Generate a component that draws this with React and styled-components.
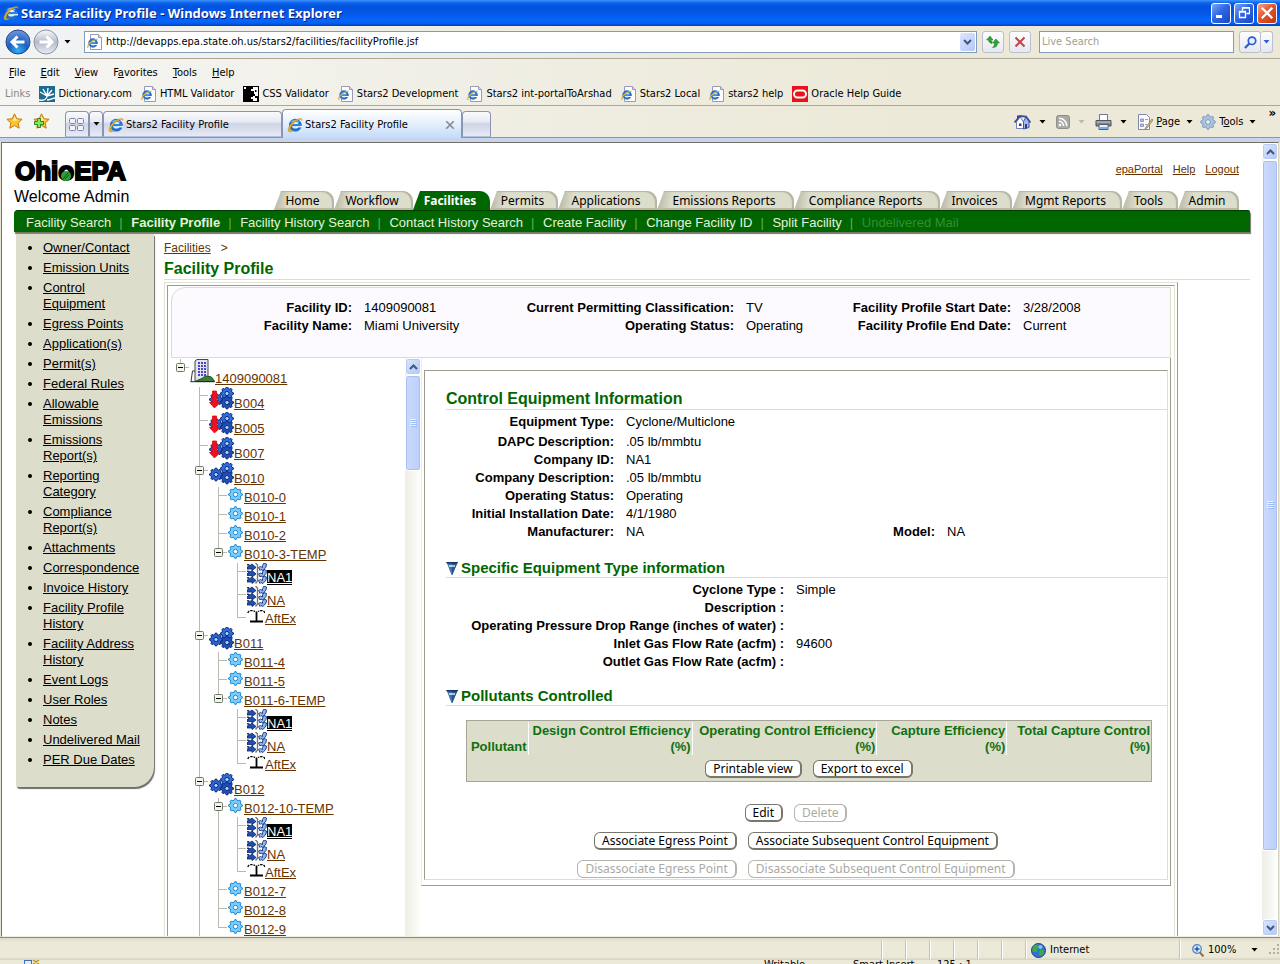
import React from "react";
import styled, { createGlobalStyle, css } from "styled-components";

const sans = `"Liberation Sans", Arial, sans-serif`;
const ui = `"DejaVu Sans Condensed", "DejaVu Sans", sans-serif`;
const label = `"Noto Sans", "Open Sans", sans-serif`;

const Global = createGlobalStyle`
  *, *::before, *::after { box-sizing: border-box; }
  html, body { margin: 0; padding: 0; }
  body { font-family: ${sans}; font-size: 13px; color: #000; background: #fff; overflow: hidden; }
  button, input { font: inherit; color: inherit; margin: 0; padding: 0; }
  button { background: none; border: 0; }
  svg { display: block; flex: none; }
  ul, dl, dd, h1, h2, h3, p { margin: 0; padding: 0; }
  ul { list-style: none; }
`;

/* ---------- icons ---------- */

const IeMark = ({ size = 16 }) => (
  <svg width={size} height={size} viewBox="0 0 16 16" aria-hidden="true">
    <circle cx="8.3" cy="8.2" r="4.9" fill="#dff1fc" stroke="#1f6fd0" strokeWidth="3" />
    <path d="M9 10.4h6v-1.500h-6z" fill="#fff" />
    <path d="M4.500 7h9.800v2.200H4.500z" fill="#2a86de" />
    <path d="M4.500 5.200A4.700 4.700 0 0 1 12 5.100" fill="none" stroke="#6cc3f4" strokeWidth="1.200" />
    <path d="M1.600 14.600C-.6 12.600 3.200 5.600 9.400 2.600c4-2 6.400-1.400 5.600 1.200C14.600 1.800 11.600 2.400 8.800 4.600 4.800 7.400 2.200 11.800 3.400 13.600c.9.7 2 .2 3 -.2-1.600 1.400-3.900 2-4.800 1.200z" fill="#e8ae26" stroke="#b98415" strokeWidth=".3" />
  </svg>
);

const IePage = () => (
  <svg width="16" height="16" viewBox="0 0 16 16" aria-hidden="true">
    <path d="M3.500.5h8l3 3v12h-11z" fill="#fdfdff" stroke="#9a9ab4" />
    <path d="M11.500.5v3h3" fill="#d8d8ea" stroke="#9a9ab4" />
    <circle cx="6" cy="9" r="3.600" fill="#e2f2fc" stroke="#2574cf" strokeWidth="2.200" />
    <path d="M3.500 8.300h7v1.500h-7z" fill="#2574cf" />
    <path d="M7 10.500h4" stroke="#fff" strokeWidth="1" />
    <path d="M1 14C0 11.500 3.500 6.500 10.500 5" fill="none" stroke="#dcae3b" strokeWidth="1.200" />
  </svg>
);

const Arrow = ({ color = "#000" }) => (
  <svg width="7" height="4" viewBox="0 0 7 4" aria-hidden="true">
    <path d="M.5 0h6L3.500 3.500z" fill={color} />
  </svg>
);

const Back = () => (
  <svg width="26" height="26" viewBox="0 0 26 26" aria-hidden="true">
    <defs>
      <radialGradient id="bk" cx=".5" cy=".85" r=".8">
        <stop offset="0" stopColor="#2fb2f4" />
        <stop offset=".5" stopColor="#1c5fc4" />
        <stop offset="1" stopColor="#6c94d6" />
      </radialGradient>
    </defs>
    <circle cx="13" cy="13" r="12" fill="url(#bk)" stroke="#27457f" />
    <path d="M12.500 7.500L7 13l5.500 5.500M7.500 13h12" fill="none" stroke="#fff" strokeWidth="3" />
  </svg>
);

const Forward = () => (
  <svg width="26" height="26" viewBox="0 0 26 26" aria-hidden="true">
    <defs>
      <linearGradient id="fw" x1="0" y1="0" x2="0" y2="1">
        <stop offset="0" stopColor="#fafbfd" />
        <stop offset=".5" stopColor="#b4bbc9" />
        <stop offset="1" stopColor="#e9edf4" />
      </linearGradient>
    </defs>
    <circle cx="13" cy="13" r="12" fill="url(#fw)" stroke="#8b93a5" />
    <path d="M13.500 7.500L19 13l-5.500 5.500M18.500 13h-12" fill="none" stroke="#fff" strokeWidth="3" />
  </svg>
);

const Refresh = () => (
  <svg width="14" height="14" viewBox="0 0 14 14" aria-hidden="true">
    <path d="M4 1L.5 5h2c0 2 1 3 3.500 3.500V6.200C5 6 5 5.500 5 5h2z" fill="#2fa336" stroke="#167a1e" strokeWidth=".5" />
    <path d="M10 4L6.500 8h2c0 2.500-.5 3.500-2 4.500 3.500 0 5-1.500 5-4.500h2z" fill="#2fa336" stroke="#167a1e" strokeWidth=".5" />
  </svg>
);

const Cross = ({ color = "#c04548", size = 12, w = 2 }) => (
  <svg width={size} height={size} viewBox="0 0 12 12" aria-hidden="true">
    <path d="M1.500 1.500l9 9M10.500 1.500l-9 9" stroke={color} strokeWidth={w} />
  </svg>
);

const Magnifier = () => (
  <svg width="13" height="13" viewBox="0 0 13 13" aria-hidden="true">
    <circle cx="8" cy="4.800" r="3.700" fill="#e6f0ff" stroke="#2a5bd8" strokeWidth="1.700" />
    <path d="M5.300 7.500L1 12" stroke="#2a5bd8" strokeWidth="2.200" />
  </svg>
);

const Star = ({ plus }) => (
  <svg width="17" height="16" viewBox="0 0 17 16" aria-hidden="true">
    <path
      d="M8.500.8l2.300 4.900 5.300.6-3.900 3.700 1 5.200-4.700-2.600-4.700 2.600 1-5.200L.9 6.300l5.300-.6z"
      fill="#fbc42f"
      stroke="#c47a12"
    />
    <path d="M8.500 3l1.500 3.600 3.500.4-6.500 1z" fill="#fff0a8" />
    {plus && <path d="M4.500 5.500h3v3h3v3h-3v3h-3v-3h-3v-3h3z" fill="#8be06c" stroke="#2b8a1c" />}
  </svg>
);

const QuickTabs = () => (
  <svg width="16" height="13" viewBox="0 0 16 13" aria-hidden="true">
    {[[0.5, 0.5], [8.5, 0.5], [0.5, 7.5], [8.5, 7.5]].map(([x, y]) => (
      <rect key={`${x}${y}`} x={x} y={y} width="6" height="5" rx="1" fill="#f1f3f9" stroke="#7b86a4" />
    ))}
  </svg>
);

const House = () => (
  <svg width="17" height="16" viewBox="0 0 17 16" aria-hidden="true">
    <path d="M3 1.500h2.500V5L3 6.500z" fill="#333c78" />
    <path d="M2.500 8v6.500h7V8l-3.500-5z" fill="#fff" stroke="#7482b4" />
    <path d="M9.500 7.500v7.500l5.500-1.500V7.500L12 3z" fill="#a9b8e4" stroke="#43539c" />
    <path d="M.5 8.500L6 2l6 .5 4.500 6" fill="none" stroke="#394d9f" strokeWidth="1.800" />
    <path d="M5 9.500h2.500V12H5zM11 10h2v4.500h-2z" fill="#2a3c9a" />
  </svg>
);

const Rss = () => (
  <svg width="14" height="14" viewBox="0 0 14 14" aria-hidden="true">
    <rect x=".5" y=".5" width="13" height="13" rx="2" fill="#aaa9a3" stroke="#8f8e88" />
    <circle cx="4" cy="10" r="1.300" fill="#fff" />
    <path d="M3 6.300a4.500 4.500 0 0 1 4.600 4.700M3 3.300a7.500 7.500 0 0 1 7.700 7.700" fill="none" stroke="#fff" strokeWidth="1.500" />
  </svg>
);

const Printer = () => (
  <svg width="17" height="16" viewBox="0 0 17 16" aria-hidden="true">
    <path d="M4.500.5h8v6h-8z" fill="#fff" stroke="#70768a" />
    <path d="M1 6.500h15v5.500h-15z" fill="#7f8594" stroke="#4d525f" />
    <path d="M1.500 8h14" stroke="#c5cad4" />
    <path d="M4 10.500h9v5H4z" fill="#e7f2fb" stroke="#565c6b" />
    <path d="M5 13h7v2H5z" fill="#69b3e8" />
  </svg>
);

const PageIcon = () => (
  <svg width="16" height="16" viewBox="0 0 16 16" aria-hidden="true">
    <path d="M1.500.5h8l3 3v12h-11z" fill="#fbfbff" stroke="#8089a8" />
    <path d="M3.500 5h3v2.500h-3zM3.500 10h3v2.500h-3zM8 5.500h3M8 10.500h2" fill="#b8c2dd" stroke="#7b88b1" strokeWidth=".8" />
    <path d="M15 5l-6 8-1 2 2-1 6-8z" fill="#e7c46a" stroke="#7d7355" strokeWidth=".7" />
  </svg>
);

const gearPoints = (cx, cy, outer, inner, teeth) =>
  Array.from({ length: teeth * 4 }, (_, i) => {
    const a = ((i - 0.5) / (teeth * 4)) * Math.PI * 2;
    const r = i % 4 < 2 ? outer : inner;
    return `${(cx + Math.cos(a) * r).toFixed(2)},${(cy + Math.sin(a) * r).toFixed(2)}`;
  }).join(" ");

const Cog = ({ cx, cy, r, fill, stroke, hole }) => (
  <g>
    <polygon points={gearPoints(cx, cy, r, r * 0.78, 8)} fill={fill} stroke={stroke} strokeWidth="1" />
    <circle cx={cx} cy={cy} r={r * 0.32} fill={hole} stroke={stroke} strokeWidth="1" />
  </g>
);

const ToolsGear = () => (
  <svg width="16" height="16" viewBox="0 0 16 16" aria-hidden="true">
    <Cog cx={8} cy={8} r={7.3} fill="#a9c3df" stroke="#7d98b8" hole="#eef0e8" />
  </svg>
);

const Gear = () => (
  <svg width="16" height="15" viewBox="0 0 16 15" aria-hidden="true">
    <Cog cx={7.500} cy={7.500} r={6.900} fill="#7accfa" stroke="#1d86d2" hole="#fff" />
  </svg>
);

const Gears = ({ down }) => (
  <svg width="25" height="23" viewBox="0 0 25 23" aria-hidden="true">
    <Cog cx={7} cy={12.500} r={6.500} fill="#2a62cf" stroke="#0b2a7c" hole="#b6d2ff" />
    <Cog cx={18} cy={6.500} r={6.500} fill="#2f6fdc" stroke="#0b2a7c" hole="#b6d2ff" />
    <Cog cx={18} cy={15.500} r={6.500} fill="#2050b4" stroke="#0b2a7c" hole="#b6d2ff" />
    {down && <path d="M3.500 4h4v11.500h3L5.500 21 .5 15.500h3z" fill="#f50f1e" stroke="#e00a18" strokeWidth=".8" />}
  </svg>
);

const Building = () => (
  <svg width="25" height="24" viewBox="0 0 25 24" aria-hidden="true">
    <path d="M1 22.500L2.500 12H6" fill="none" stroke="#333" />
    <path d="M5 2l2-1.500h11V22H5z" fill="#e4e4f0" stroke="#444" />
    {[3, 6, 9, 12, 15].map((y) =>
      [8, 11, 14].map((x) => <rect key={`${x}-${y}`} x={x} y={y} width="2" height="2" fill="#4a46c9" />)
    )}
    <path d="M6 22.500c2-2 4-2 6-3 2-2 5-3 7-2 3 0 4 2 5.500 5z" fill="#3f7d3a" stroke="#1f4a1e" />
    <path d="M.5 22.700h24" stroke="#222" />
  </svg>
);

const Equipment = () => (
  <svg width="20" height="21" viewBox="0 0 20 21" aria-hidden="true">
    {[3.5, 10, 16.5].map((y) => (
      <g key={y}>
        <path d={`M0 ${y - 2}h2l1 1 2-1.500 4 3.500-4 3v-1.500h-5v-2l2-.5z`} fill="#1f4fb0" stroke="#0a2464" strokeWidth=".8" />
        <path d={`M11.500 ${y + 1}l2-1 2 1 0-2 1.500-2.500 2.500 1-.5 3-3 3.500-2-1-1 1z`} fill="#8fb5ea" stroke="#14357e" strokeWidth=".9" />
      </g>
    ))}
    <path d="M8.500 0l2 2v16l-2 2.500" fill="none" stroke="#777" strokeWidth="1.400" />
  </svg>
);

const Stack = () => (
  <svg width="18" height="14" viewBox="0 0 18 14" aria-hidden="true">
    <path d="M9.500 2.500v10M3 12.500h13" stroke="#000" strokeWidth="1.800" />
    <path d="M.8 4C1.500 1.500 4 .8 8 2.500M18 4C17 1.500 15 .8 11 2.500" fill="none" stroke="#000" strokeWidth="1.300" strokeDasharray="2.400 1" />
  </svg>
);

const Minus = () => (
  <svg width="9" height="9" viewBox="0 0 9 9" aria-hidden="true">
    <rect x=".5" y=".5" width="8" height="8" rx="1" fill="#f4f4ec" stroke="#6d7a68" />
    <path d="M2 4.500h5" stroke="#000" />
  </svg>
);

const Collapse = () => (
  <svg width="12" height="13" viewBox="0 0 12 13" aria-hidden="true">
    <path d="M.5 0h11L6.500 13h-1z" fill="#3a73ae" />
    <path d="M6 13L12 0H6z" fill="#24558c" />
    <path d="M0 0h12l-1 1.500H1z" fill="#16355f" />
    <path d="M3 4h6" stroke="#fff" strokeWidth="1.300" />
  </svg>
);

const Dictionary = () => (
  <svg width="16" height="16" viewBox="0 0 16 16" aria-hidden="true">
    <rect width="16" height="16" fill="#1b6a92" />
    <path d="M0 14c5 1 8-1 8-4M8 10L1 6M8 10L4 3M8 10L9 2M8 10l5-6M8 10l7-2M8 14c3 0 6-2 8-2" fill="none" stroke="#fff" strokeWidth="1.400" />
  </svg>
);

const CssMark = () => (
  <svg width="16" height="16" viewBox="0 0 16 16" aria-hidden="true">
    <rect width="16" height="16" fill="#000" />
    <path d="M10 1h5v9h-3v-2h-1v-3h-3V3h2z" fill="#fff" />
    <path d="M12 4h1.500v2H12zM6 1.500h1.500V3H6z" fill="#000" />
    <path d="M1 1h2v2H1zM10 10h2v2h2v3h-4v-2H8v-2h2z" fill="#fff" />
  </svg>
);

const OracleMark = () => (
  <svg width="16" height="16" viewBox="0 0 16 16" aria-hidden="true">
    <rect width="16" height="16" fill="#e8121b" />
    <rect x="2" y="4.500" width="12" height="7" rx="3.500" fill="#e8121b" stroke="#fff" strokeWidth="2" />
  </svg>
);

const Globe = () => (
  <svg width="15" height="15" viewBox="0 0 15 15" aria-hidden="true">
    <circle cx="7.500" cy="7.500" r="7" fill="#2f72d2" stroke="#1b3f86" />
    <path d="M3 2.500c3-2 5-1 5 1s-2 2-2 4-3 2-4.500 1C1 6 1.500 4 3 2.500zM9 7c3-1 4 0 4 2s-2 4-3.500 4S8 8 9 7z" fill="#41a846" />
    <circle cx="9.500" cy="4" r="2" fill="#b5dcfa" opacity=".7" />
  </svg>
);

const ZoomIcon = () => (
  <svg width="12" height="13" viewBox="0 0 12 13" aria-hidden="true">
    <path d="M7.500 8l4 4.500" stroke="#8a7442" strokeWidth="2" />
    <circle cx="5" cy="5" r="4.300" fill="#d9ecfd" stroke="#4c7fc4" strokeWidth="1.200" />
    <path d="M5 2.500v5M2.500 5h5" stroke="#1d55b4" strokeWidth="1.500" />
  </svg>
);

const Grip = () => (
  <svg width="12" height="12" viewBox="0 0 12 12" aria-hidden="true">
    {[[9, 1], [5, 5], [9, 5], [1, 9], [5, 9], [9, 9]].map(([x, y]) => (
      <rect key={`${x}${y}`} x={x} y={y} width="2" height="2" fill="#b4b09c" />
    ))}
  </svg>
);

const Chevron = ({ up }) => (
  <svg width="9" height="6" viewBox="0 0 9 6" aria-hidden="true">
    <path d={up ? "M1 5l3.500-3.500L8 5" : "M1 1l3.500 3.500L8 1"} fill="none" stroke="#3f5585" strokeWidth="2" />
  </svg>
);

/* ---------- browser chrome ---------- */

const Window = styled.div`
  display: flex;
  flex-direction: column;
  height: 100vh;
  background: #ece9d8;
`;

const TitleBar = styled.header`
  display: flex;
  align-items: center;
  gap: 2px;
  height: 26px;
  flex: none;
  padding: 0 3px;
  background: linear-gradient(#3f94fb 0, #0a62ef 3px, #0352dd 7px, #0358ea 14px, #0566fb 20px, #0460f4 23px, #0240b4 26px);
  color: #fff;
`;

const WindowTitle = styled.h1`
  flex: 1;
  font: bold 13px/20px ${label};
  text-shadow: 1px 1px 0 #0a1f78;
`;

const Caption = styled.div`
  display: flex;
  gap: 3px;
`;

const CaptionButton = styled.button`
  display: grid;
  place-items: center;
  width: 20px;
  height: 21px;
  border: 1px solid #fff;
  border-radius: 3px;
  background: ${(p) =>
    p.$close
      ? "linear-gradient(135deg, #f0a58c, #e3562f 45%, #bf3511)"
      : "linear-gradient(135deg, #7ea5f5, #2f66e4 45%, #1c47c0)"};
`;

const NavBar = styled.div`
  display: flex;
  align-items: center;
  height: 33px;
  flex: none;
  padding: 0 7px 0 5px;
  border-bottom: 1px solid #aca899;
  background: linear-gradient(90deg, #f2f3f6, #ece9d8 60%);
  font: 11px/14px ${ui};
`;

const NavButtons = styled.div`
  display: flex;
  align-items: center;
  gap: 2px;
  width: 79px;
  flex: none;
`;

const RoundButton = styled.button`
  display: flex;
`;

const MenuArrow = styled.button`
  display: flex;
  padding: 4px 3px;
`;

const FieldBox = styled.label`
  display: flex;
  align-items: center;
  gap: 3px;
  height: 22px;
  border: 1px solid #7f9db9;
  background: #fff;
  padding: 0 1px 0 2px;
  ${(p) => (p.$grow ? css`flex: 1;` : css`width: 195px; margin-left: 8px;`)}

  input {
    flex: 1;
    min-width: 0;
    border: 0;
    outline: 0;
    background: none;
    line-height: 18px;
  }
  input::placeholder { color: #a3a08f; opacity: 1; }
`;

const DropButton = styled.button`
  display: grid;
  place-items: center;
  width: 15px;
  height: 18px;
  border-radius: 2px;
  background: linear-gradient(135deg, #dde7fd, #b2c7f7);
`;

const SquareButton = styled.button`
  display: grid;
  place-items: center;
  width: ${(p) => p.$w || 22}px;
  height: 22px;
  margin-left: ${(p) => (p.$joined ? 0 : 5)}px;
  border: 1px solid #b9bfd0;
  border-left-width: ${(p) => (p.$joined ? 0 : 1)}px;
  border-radius: 3px;
  background: linear-gradient(#fdfdfe, #e6e8ef);
`;

const BarStack = styled.div`
  flex: none;
  height: 47px;
  border-bottom: 1px solid #aca899;
  background: linear-gradient(90deg, #f5f5f3, #ece9d8 70%);
  font: 11px/16px ${ui};
`;

const MenuRow = styled.nav`
  display: flex;
  gap: 15px;
  padding: 6px 9px 0;
`;

const LinksRow = styled.nav`
  display: flex;
  align-items: center;
  gap: 9px;
  padding: 5px 5px 0;
  color: #8b887c;
`;

const BarLink = styled.a`
  display: flex;
  align-items: center;
  gap: 3px;
  color: #000;
  text-decoration: none;
  white-space: nowrap;
`;

const TabStrip = styled.div`
  display: flex;
  align-items: flex-end;
  height: 32px;
  flex: none;
  border-bottom: 1px solid #8b95b2;
  background: linear-gradient(90deg, #f5f5f3, #ece9d8 70%);
  font: 11px/14px ${ui};
`;

const Favs = styled.div`
  display: flex;
  align-items: center;
  gap: 10px;
  width: 65px;
  height: 32px;
  padding-left: 6px;
`;

const BrowserTab = styled.button`
  display: flex;
  align-items: center;
  justify-content: ${(p) => (p.$center ? "center" : "flex-start")};
  gap: 2px;
  width: ${(p) => p.$w}px;
  height: ${(p) => (p.$active ? 29 : 26)}px;
  margin-bottom: ${(p) => (p.$active ? -1 : 0)}px;
  padding: ${(p) => (p.$center ? "0" : "1px 6px 0 4px")};
  border: 1px solid #8b95b2;
  border-bottom: ${(p) => (p.$active ? "0" : "1px solid #b8c0d6")};
  border-radius: 4px 4px 0 0;
  background: ${(p) =>
    p.$active
      ? "linear-gradient(#fff, #e4effd 50%, #c3daf9)"
      : "linear-gradient(#fafafc, #e9ebf3 40%, #ced4e6 50%, #e8ebf6)"};
  white-space: nowrap;

  span { flex: 1; text-align: left; }
`;

const Commands = styled.div`
  display: flex;
  align-items: center;
  justify-content: flex-end;
  flex: 1;
  height: 31px;
  gap: 7px;
  padding: 0 4px 0 0;
`;

const Command = styled.button`
  display: flex;
  align-items: center;
  gap: ${(p) => (p.$text ? 3 : 8)}px;
  padding-right: ${(p) => (p.$text ? 0 : 3)}px;
  svg:last-child { margin-left: ${(p) => (p.$text ? 3 : 0)}px; }
`;

const More = styled.button`
  align-self: flex-start;
  margin-left: 5px;
  font: bold 13px/14px ${ui};
`;

const FrameBand = styled.div`
  height: 4px;
  flex: none;
  background: #c6d4f0;
`;

/* ---------- scroll bars ---------- */

const Track = styled.div`
  display: flex;
  flex-direction: column;
  flex: none;
  width: 16px;
  background: linear-gradient(90deg, #eeeee6, #fefefb);
`;

const ScrollButton = styled.button`
  display: grid;
  place-items: center;
  height: 17px;
  flex: none;
  border: 1px solid #fff;
  border-radius: 3px;
  background: linear-gradient(135deg, #dbe6fd, #b4c8f6);
  box-shadow: inset 0 0 0 1px #b9cbf3;
`;

const Run = styled.div`
  flex: 1;
  min-height: 0;
`;

const Thumb = styled.div`
  display: grid;
  place-items: center;
  height: ${(p) => p.$size};
  border: 1px solid #fff;
  border-radius: 3px;
  background: linear-gradient(90deg, #cbdafd, #bccffb);
  box-shadow: inset 0 0 0 1px #a9bff0;
`;

const ThumbGrip = () => (
  <svg width="7" height="8" viewBox="0 0 7 8" aria-hidden="true">
    <path d="M0 .5h6M0 2.500h6M0 4.500h6M0 6.500h6" stroke="#eef4fe" />
    <path d="M1 1.500h6M1 3.500h6M1 5.500h6M1 7.500h6" stroke="#8cb0f8" strokeWidth=".7" />
  </svg>
);

const Scroller = ({ size, name, endless }) => (
  <Track>
    <ScrollButton aria-label={`Scroll ${name} up`}><Chevron up /></ScrollButton>
    <Run><Thumb $size={size}><ThumbGrip /></Thumb></Run>
    {!endless && <ScrollButton aria-label={`Scroll ${name} down`}><Chevron /></ScrollButton>}
  </Track>
);

/* ---------- page ---------- */

const Pane = styled.div`
  display: flex;
  flex: 1;
  min-height: 0;
  margin-left: 1px;
  margin-right: 1px;
  border: 1px solid #716f64;
  border-right: 1px solid #d8d4c4;
  border-bottom: 1px solid #f1efe2;
  background: #fff;
`;

const PageBody = styled.div`
  display: flex;
  flex-direction: column;
  flex: 1;
  min-width: 0;
  overflow: hidden;
  padding: 0 12px;
`;

const Banner = styled.div`
  display: flex;
  justify-content: space-between;
  height: 67px;
  flex: none;
  padding-right: 11px;
`;

const Brand = styled.div`
  padding-top: 16px;
  font-size: 16px;
  line-height: 20px;
  white-space: nowrap;
`;

const Logo = styled.div`
  position: relative;
  width: max-content;
  margin-bottom: 3px;
  padding-left: 1px;
  font: bold 26px/25px ${sans};
  -webkit-text-stroke: 2px #000;

  svg { position: absolute; left: 47px; top: 12px; }
`;

const BannerSide = styled.div`
  display: flex;
  flex-direction: column;
  justify-content: space-between;
  align-items: flex-end;
`;

const TopLinks = styled.nav`
  display: flex;
  gap: 10px;
  padding-top: 19px;
  font-size: 11px;
  line-height: 14px;
`;

const BrownLink = styled.a`
  color: #663300;
  text-decoration: underline;
`;

const AppTabs = styled.nav`
  display: flex;
  font: 12px/20px ${label};
`;

const AppTab = styled.a`
  flex: none;
  width: ${(p) => p.$w}px;
  height: 19px;
  padding-right: 3px;
  text-align: center;
  text-decoration: none;
  white-space: nowrap;
  clip-path: polygon(7px 0, 100% 0, 100% 100%, 0 100%);
  border-radius: 0 10px 0 0;
  color: ${(p) => (p.$active ? "#fff" : "#000")};
  font-weight: ${(p) => (p.$active ? "bold" : "normal")};
  background: ${(p) =>
    p.$active ? "#006600" : "linear-gradient(100deg, #bcbcaa 4px, #dcddcb 16px)"};
  box-shadow: ${(p) => (p.$active ? "none" : "inset -2px 1px 1px #b4b4a2, inset 0 -2px 0 #c0b9a2")};
`;

const SubNav = styled.nav`
  display: flex;
  align-items: center;
  gap: 8px;
  height: 22px;
  flex: none;
  margin-bottom: 2px;
  padding: 2px 12px 0;
  border-top: 1px solid #003d00;
  border-radius: 4px 2px 0 0;
  background: #006600;
  box-shadow: 1px 2px 1px #77776c;
  white-space: nowrap;
`;

const Divider = styled.span`
  width: 4px;
  color: #5fae5f;
`;

const SubNavLink = styled.a`
  color: ${(p) => (p.$off ? "#2f9130" : "#e6f2dc")};
  font-weight: ${(p) => (p.$active ? "bold" : "normal")};
  text-decoration: none;
`;

const Columns = styled.div`
  display: flex;
  flex: 1;
  min-height: 0;
`;

const Side = styled.nav`
  align-self: flex-start;
  flex: none;
  width: 138px;
  margin: 0 10px 0 2px;
  padding: 6px 12px 15px 27px;
  background: #dcddcb;
  border-radius: 0 0 20px 3px;
  box-shadow: 1px 2px 1px #6e6e66;

  ul { list-style: disc; }
  li { margin-bottom: 4px; line-height: 16px; }
  a { color: #000; text-decoration: underline; }
`;

const Main = styled.main`
  display: flex;
  flex-direction: column;
  flex: 1;
  min-width: 0;
`;

const Crumbs = styled.div`
  padding-top: 6px;
  font-size: 12px;
  line-height: 16px;
  color: #663300;

  a { margin-right: 10px; }
`;

const Heading = styled.h2`
  display: flex;
  align-items: center;
  gap: 3px;
  margin-top: ${(p) => p.$top}px;
  border-bottom: 1px solid #dcddd0;
  color: #006600;
  font-size: ${(p) => (p.$small ? 15 : 16)}px;
  line-height: ${(p) => (p.$small ? 18 : 20)}px;

  button { display: flex; }
`;

const OuterFrame = styled.div`
  display: flex;
  flex: 1;
  min-height: 0;
  margin: 2px 72px 0 0;
  padding: 2px 2px 0;
  border: 1px solid #e2e2d4;
  border-right-color: #9d9c8c;
  border-bottom: 0;
`;

const InnerFrame = styled.div`
  display: flex;
  flex-direction: column;
  flex: 1;
  min-width: 0;
  padding: 1px 3px 0;
  border: 1px solid #9d9c8c;
  border-right-color: #e2e2d4;
  border-bottom: 0;
`;

const Fields = styled.dl`
  display: grid;
  grid-template-columns: ${(p) => p.$cols};
  column-gap: 12px;
  grid-auto-rows: 18px;
  line-height: 18px;
  white-space: nowrap;

  dt { font-weight: bold; justify-self: end; }
`;

const Summary = styled.section`
  flex: none;
  padding: 11px 0 22px;
  border: 1px solid #dcdccb;
  border-radius: 14px 0 0 0;
  background: #fcfaff;
`;

const Split = styled.div`
  display: flex;
  flex: 1;
  min-height: 0;
`;

const Tree = styled.ul`
  width: 234px;
  flex: none;
  overflow: hidden;
  padding-top: 1px;
`;

const TreeRow = styled.li`
  display: flex;
  height: ${(p) => p.$h}px;
  align-items: stretch;

  a {
    align-self: flex-end;
    line-height: 15px;
    margin-bottom: 1px;
    white-space: nowrap;
  }
`;

const line = "linear-gradient(#b9b9ad, #b9b9ad)";
const Guide = styled.span`
  width: 19px;
  flex: none;
  padding: 4px 0 0 5px;
  background-repeat: no-repeat;
  background-image: ${line}, ${line};
  background-position: 9px 0, 9px 8px;
  background-size:
    1px ${(p) => ({ mid: "100%", through: "100%", last: "9px", none: "0", root: "6px" })[p.$kind]},
    ${(p) => (["mid", "last", "root"].includes(p.$kind) ? "9px" : "0")} 1px;

  button { display: flex; }
`;

const TreeLink = styled(BrownLink)`
  ${(p) => p.$selected && css`background: #000; color: #fff;`}
`;

const Detail = styled.div`
  align-self: flex-start;
  flex: 1;
  min-width: 0;
  padding: 12px 2px 5px;
  border: 1px solid #9d9c8c;
  border-left-color: #ecece2;
  border-top: 0;
`;

const DetailInner = styled.section`
  padding: 18px 0 1px 21px;
  border: 1px solid #dedfce;
  border-top-color: #9d9c8c;
  border-left-color: #9d9c8c;
`;

const FieldGap = styled.div`
  padding-top: ${(p) => p.$h}px;
`;

const Grid = styled.table`
  width: calc(100% - 35px);
  margin: 14px 15px 22px 20px;
  table-layout: fixed;
  border-spacing: 0;
  border: 1px solid #a6a696;
  background: #dcddcb;
  padding-top: 1px;

  th {
    padding: 1px 1px 0;
    border-right: 1px solid #fff;
    color: #11700f;
    font-size: 13px;
    line-height: 16px;
    text-align: right;
    vertical-align: bottom;
  }
  th:last-child { border-right: 0; }
  td { padding: 5px 0 3px; }
`;

const Col = styled.col`
  width: ${(p) => p.$w}%;
`;

const Buttons = styled.div`
  display: flex;
  justify-content: center;
  gap: 11px;
  margin-bottom: ${(p) => p.$gap || 0}px;
  padding-right: ${(p) => p.$shift || 0}px;
`;

const PillButton = styled.button`
  height: 18px;
  padding: 0 7px;
  border: 1px solid #77776c;
  border-bottom-width: 2px;
  border-right-width: 2px;
  border-radius: 6px;
  background: #fff;
  color: #000;
  font: 12px/14px ${label};
  white-space: nowrap;

  &:disabled {
    border-color: #b5b5ad;
    border-bottom-width: 1px;
    color: #aaaaa4;
  }
`;

/* ---------- status bar ---------- */

const StatusBar = styled.footer`
  display: flex;
  align-items: center;
  justify-content: flex-end;
  height: 23px;
  flex: none;
  border-top: 1px solid #8d8b7d;
  background: linear-gradient(#dedbcb 0, #ece9d8 4px, #ece9d8 19px, #d6d2c0);
  font: 11px/16px ${ui};
`;

const StatusCell = styled.div`
  display: flex;
  align-items: center;
  gap: 4px;
  width: ${(p) => p.$w}px;
  height: 19px;
  padding: 2px 0 0 ${(p) => p.$pad || 0}px;
  border-left: 1px solid #c5c2b0;
  box-shadow: inset 1px 0 0 #fff;
  white-space: nowrap;

  button { margin-left: auto; padding: 4px 10px; }
`;

const Behind = styled.div`
  display: grid;
  grid-template-columns: 764fr 89fr 84fr 343fr;
  height: 4px;
  flex: none;
  overflow: hidden;
  background: #ece9d8;
  font: 11px/10px ${ui};

  svg { margin-left: 24px; }
`;

/* ---------- data ---------- */

const favourites = [
  ["Dictionary.com", Dictionary],
  ["HTML Validator", IePage],
  ["CSS Validator", CssMark],
  ["Stars2 Development", IePage],
  ["Stars2 int-portalToArshad", IePage],
  ["Stars2 Local", IePage],
  ["stars2 help", IePage],
  ["Oracle Help Guide", OracleMark],
];

const appTabs = [
  ["Home", 60], ["Workflow", 79], ["Facilities", 77], ["Permits", 68], ["Applications", 99],
  ["Emissions Reports", 137], ["Compliance Reports", 146], ["Invoices", 72], ["Mgmt Reports", 110],
  ["Tools", 56], ["Admin", 61],
];

const subNav = [
  "Facility Search", "Facility Profile", "Facility History Search", "Contact History Search",
  "Create Facility", "Change Facility ID", "Split Facility", "Undelivered Mail",
];

const sideLinks = [
  "Owner/Contact", "Emission Units", "Control Equipment", "Egress Points", "Application(s)",
  "Permit(s)", "Federal Rules", "Allowable Emissions", "Emissions Report(s)", "Reporting Category",
  "Compliance Report(s)", "Attachments", "Correspondence", "Invoice History",
  "Facility Profile History", "Facility Address History", "Event Logs", "User Roles", "Notes",
  "Undelivered Mail", "PER Due Dates",
];

const heights = { root: 28, down: 25, unit: 25, process: 19, equipment: 23, stack: 18 };
const treeIcons = {
  root: <Building />, down: <Gears down />, unit: <Gears />, process: <Gear />,
  equipment: <Equipment />, stack: <Stack />,
};
const chain = (through) => [
  ["equipment", "NA1", ["none", "through", through, "mid"], { selected: true }],
  ["equipment", "NA", ["none", "through", through, "mid"]],
  ["stack", "AftEx", ["none", "through", through, "last"]],
];
const tree = [
  ["root", "1409090081", ["root"], { open: true }],
  ["down", "B004", ["none", "mid"]],
  ["down", "B005", ["none", "mid"]],
  ["down", "B007", ["none", "mid"]],
  ["unit", "B010", ["none", "mid"], { open: true }],
  ["process", "B010-0", ["none", "through", "mid"]],
  ["process", "B010-1", ["none", "through", "mid"]],
  ["process", "B010-2", ["none", "through", "mid"]],
  ["process", "B010-3-TEMP", ["none", "through", "last"], { open: true }],
  ...chain("none"),
  ["unit", "B011", ["none", "mid"], { open: true }],
  ["process", "B011-4", ["none", "through", "mid"]],
  ["process", "B011-5", ["none", "through", "mid"]],
  ["process", "B011-6-TEMP", ["none", "through", "last"], { open: true }],
  ...chain("none"),
  ["unit", "B012", ["none", "mid"], { open: true }],
  ["process", "B012-10-TEMP", ["none", "through", "mid"], { open: true }],
  ...chain("through"),
  ["process", "B012-7", ["none", "through", "mid"]],
  ["process", "B012-8", ["none", "through", "mid"]],
  ["process", "B012-9", ["none", "through", "last"]],
];

const gridColumns = [
  ["Pollutant", 9], ["Design Control Efficiency (%)", 24], ["Operating Control Efficiency (%)", 27],
  ["Capture Efficiency (%)", 19], ["Total Capture Control (%)", 21],
];

const Key = ({ children: [before, key, after] }) => <span>{before}<u>{key}</u>{after}</span>;

const Pairs = ({ items }) =>
  items.map(([name, value]) => (
    <React.Fragment key={name}>
      <dt>{name}</dt>
      <dd>{value}</dd>
    </React.Fragment>
  ));

export default function App() {
  return (
    <Window>
      <Global />
      <TitleBar>
        <IeMark />
        <WindowTitle>Stars2 Facility Profile - Windows Internet Explorer</WindowTitle>
        <Caption>
          <CaptionButton aria-label="Minimize">
            <svg width="12" height="12"><path d="M1 9.500h6" stroke="#fff" strokeWidth="3" /></svg>
          </CaptionButton>
          <CaptionButton aria-label="Restore">
            <svg width="12" height="12" fill="none" stroke="#fff">
              <path d="M4.500 3.500v-3h7v6h-3M4 1h8M1.500 4.500h6v6h-6zM1 5h7" strokeWidth="1.300" />
            </svg>
          </CaptionButton>
          <CaptionButton $close aria-label="Close"><Cross color="#fff" size={14} /></CaptionButton>
        </Caption>
      </TitleBar>

      <NavBar>
        <NavButtons>
          <RoundButton aria-label="Back"><Back /></RoundButton>
          <RoundButton aria-label="Forward"><Forward /></RoundButton>
          <MenuArrow aria-label="Recent pages"><Arrow /></MenuArrow>
        </NavButtons>
        <FieldBox $grow>
          <IePage />
          <input aria-label="Address" defaultValue="http://devapps.epa.state.oh.us/stars2/facilities/facilityProfile.jsf" />
          <DropButton aria-label="Show addresses"><Chevron /></DropButton>
        </FieldBox>
        <SquareButton aria-label="Refresh"><Refresh /></SquareButton>
        <SquareButton aria-label="Stop"><Cross /></SquareButton>
        <FieldBox>
          <input aria-label="Search" placeholder="Live Search" />
        </FieldBox>
        <SquareButton aria-label="Go"><Magnifier /></SquareButton>
        <SquareButton $joined $w={12} aria-label="Search options"><Arrow color="#2a5bd8" /></SquareButton>
      </NavBar>

      <BarStack>
        <MenuRow>
          <Key>{["", "F", "ile"]}</Key>
          <Key>{["", "E", "dit"]}</Key>
          <Key>{["", "V", "iew"]}</Key>
          <Key>{["F", "a", "vorites"]}</Key>
          <Key>{["", "T", "ools"]}</Key>
          <Key>{["", "H", "elp"]}</Key>
        </MenuRow>
        <LinksRow>
          <span>Links</span>
          {favourites.map(([name, Icon]) => (
            <BarLink href="#" key={name}><Icon />{name}</BarLink>
          ))}
        </LinksRow>
      </BarStack>

      <TabStrip>
        <Favs><Star /><Star plus /></Favs>
        <BrowserTab $w={24} $center aria-label="Quick tabs"><QuickTabs /></BrowserTab>
        <BrowserTab $w={14} $center aria-label="Tab list"><Arrow /></BrowserTab>
        <BrowserTab $w={179}><IeMark /><span>Stars2 Facility Profile</span></BrowserTab>
        <BrowserTab $w={180} $active>
          <IeMark /><span>Stars2 Facility Profile</span><Cross color="#85898f" size={10} />
        </BrowserTab>
        <BrowserTab $w={29} aria-label="New tab" />
        <Commands>
          <Command aria-label="Home page"><House /><Arrow /></Command>
          <Command aria-label="Feeds"><Rss /><Arrow color="#bdb9a8" /></Command>
          <Command aria-label="Print"><Printer /><Arrow /></Command>
          <Command $text><PageIcon /><Key>{["", "P", "age"]}</Key><Arrow /></Command>
          <Command $text><ToolsGear /><Key>{["T", "o", "ols"]}</Key><Arrow /></Command>
          <More aria-label="More commands">»</More>
        </Commands>
      </TabStrip>
      <FrameBand />

      <Pane>
        <PageBody>
          <Banner>
            <Brand>
              <Logo>
                OhioEPA
                <svg width="10" height="10" viewBox="0 0 10 10" aria-hidden="true">
                  <circle cx="5" cy="5" r="5" fill="#2f9e35" />
                  <path d="M2 8l5-6M4 8l4-4" stroke="#0a3d0d" strokeWidth=".8" />
                </svg>
              </Logo>
              Welcome Admin
            </Brand>
            <BannerSide>
              <TopLinks>
                <BrownLink href="#">epaPortal</BrownLink>
                <BrownLink href="#">Help</BrownLink>
                <BrownLink href="#">Logout</BrownLink>
              </TopLinks>
              <AppTabs>
                {appTabs.map(([name, w]) => (
                  <AppTab href="#" key={name} $w={w} $active={name === "Facilities"}>{name}</AppTab>
                ))}
              </AppTabs>
            </BannerSide>
          </Banner>
          <SubNav>
            {subNav.map((name, i) => (
              <React.Fragment key={name}>
                {i > 0 && <Divider>|</Divider>}
                <SubNavLink href="#" $active={i === 1} $off={i === 7}>{name}</SubNavLink>
              </React.Fragment>
            ))}
          </SubNav>

          <Columns>
            <Side>
              <ul>{sideLinks.map((name) => <li key={name}><a href="#">{name}</a></li>)}</ul>
            </Side>
            <Main>
              <Crumbs><BrownLink href="#">Facilities</BrownLink>&gt;</Crumbs>
              <Heading $top={3}>Facility Profile</Heading>
              <OuterFrame>
                <InnerFrame>
                  <Summary>
                    <Fields $cols="180fr 140fr 218fr 80fr 173fr 147fr">
                      <Pairs
                        items={[
                          ["Facility ID:", "1409090081"],
                          ["Current Permitting Classification:", "TV"],
                          ["Facility Profile Start Date:", "3/28/2008"],
                          ["Facility Name:", "Miami University"],
                          ["Operating Status:", "Operating"],
                          ["Facility Profile End Date:", "Current"],
                        ]}
                      />
                    </Fields>
                  </Summary>
                  <Split>
                    <Tree>
                      {tree.map(([type, name, guides, opts = {}], i) => (
                        <TreeRow key={i} $h={heights[type]}>
                          {guides.map((kind, g) => (
                            <Guide key={g} $kind={kind}>
                              {opts.open && g === guides.length - 1 && (
                                <button aria-label={`Collapse ${name}`}><Minus /></button>
                              )}
                            </Guide>
                          ))}
                          {treeIcons[type]}
                          <TreeLink href="#" $selected={opts.selected}>{name}</TreeLink>
                        </TreeRow>
                      ))}
                    </Tree>
                    <Scroller size="96px" name="tree" endless />
                    <Detail>
                      <DetailInner>
                        <Heading $top={0}>Control Equipment Information</Heading>
                        <FieldGap $h={3} />
                        <Fields $cols="168fr 541fr">
                          <Pairs items={[["Equipment Type:", "Cyclone/Multiclone"]]} />
                        </Fields>
                        <FieldGap $h={2} />
                        <Fields $cols="168fr 541fr">
                          <Pairs
                            items={[
                              ["DAPC Description:", ".05 lb/mmbtu"],
                              ["Company ID:", "NA1"],
                              ["Company Description:", ".05 lb/mmbtu"],
                              ["Operating Status:", "Operating"],
                              ["Initial Installation Date:", "4/1/1980"],
                            ]}
                          />
                        </Fields>
                        <Fields $cols="168fr 177fr 120fr 220fr">
                          <Pairs items={[["Manufacturer:", "NA"], ["Model:", "NA"]]} />
                        </Fields>
                        <Heading $top={18} $small>
                          <button aria-label="Collapse section"><Collapse /></button>
                          Specific Equipment Type information
                        </Heading>
                        <FieldGap $h={3} />
                        <Fields $cols="338fr 371fr">
                          <Pairs
                            items={[
                              ["Cyclone Type :", "Simple"],
                              ["Description :", ""],
                              ["Operating Pressure Drop Range (inches of water) :", ""],
                              ["Inlet Gas Flow Rate (acfm) :", "94600"],
                              ["Outlet Gas Flow Rate (acfm) :", ""],
                            ]}
                          />
                        </Fields>
                        <Heading $top={16} $small>
                          <button aria-label="Collapse section"><Collapse /></button>
                          Pollutants Controlled
                        </Heading>
                        <Grid>
                          <colgroup>{gridColumns.map(([name, w]) => <Col key={name} $w={w} />)}</colgroup>
                          <thead>
                            <tr>{gridColumns.map(([name]) => <th key={name} scope="col">{name}</th>)}</tr>
                          </thead>
                          <tfoot>
                            <tr>
                              <td colSpan={5}>
                                <Buttons>
                                  <PillButton>Printable view</PillButton>
                                  <PillButton>Export to excel</PillButton>
                                </Buttons>
                              </td>
                            </tr>
                          </tfoot>
                        </Grid>
                        <Buttons $gap={10} $shift={21}>
                          <PillButton>Edit</PillButton>
                          <PillButton disabled>Delete</PillButton>
                        </Buttons>
                        <Buttons $gap={10} $shift={21}>
                          <PillButton>Associate Egress Point</PillButton>
                          <PillButton>Associate Subsequent Control Equipment</PillButton>
                        </Buttons>
                        <Buttons $shift={21}>
                          <PillButton disabled>Disassociate Egress Point</PillButton>
                          <PillButton disabled>Disassociate Subsequent Control Equipment</PillButton>
                        </Buttons>
                      </DetailInner>
                    </Detail>
                  </Split>
                </InnerFrame>
              </OuterFrame>
            </Main>
          </Columns>
        </PageBody>
        <Scroller size="91%" name="page" />
      </Pane>

      <StatusBar>
        {[0, 1, 2, 3, 4, 5].map((n) => <StatusCell key={n} $w={24} />)}
        <StatusCell $w={154} $pad={5}><Globe />Internet</StatusCell>
        <StatusCell $w={89} $pad={12}>
          <ZoomIcon />100%<button aria-label="Change zoom"><Arrow /></button>
        </StatusCell>
        <Grip />
      </StatusBar>
      <Behind aria-hidden="true">
        <svg width="16" height="4" viewBox="0 0 16 4">
          <path d="M0 .5h8M.5 0v4M7.500 0v4" stroke="#3c6fc4" fill="none" />
          <path d="M9 0l6 4M15 0L9 4" stroke="#b99a1c" strokeWidth="1.500" />
        </svg>
        <span>Writable</span>
        <span>Smart Insert</span>
        <span>125 : 1</span>
      </Behind>
    </Window>
  );
}
